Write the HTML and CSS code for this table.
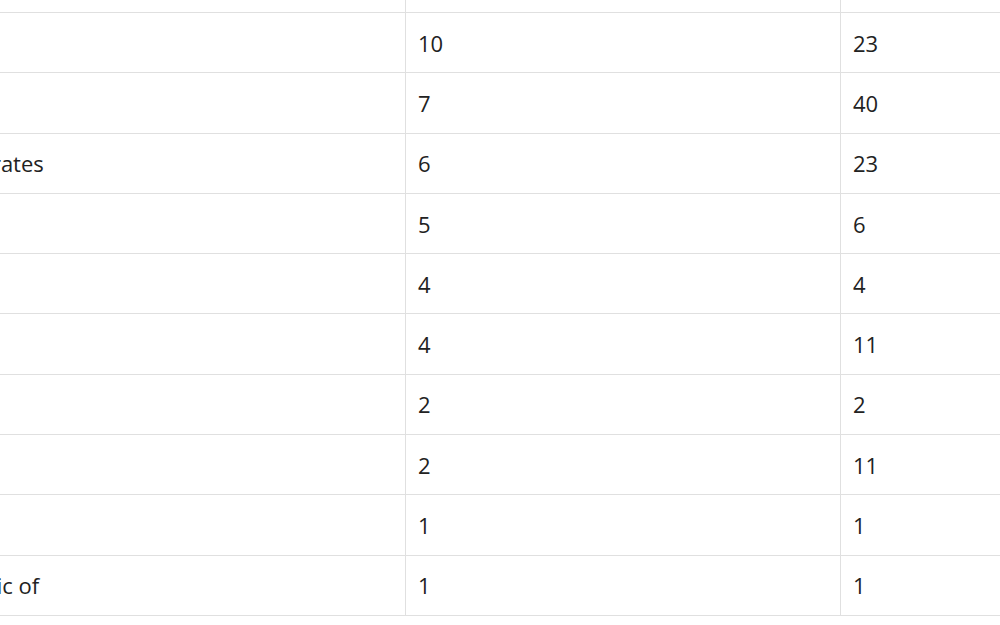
FILE: index.html
```html
<!DOCTYPE html>
<html lang="en">
<head>
<meta charset="utf-8">
<title>Table</title>
<link rel="stylesheet" href="styles.css">
</head>
<body>
<div class="table">
  <div class="row row-cut"><div class="cell c1"></div><div class="cell c2"></div><div class="cell c3"></div></div>
  <div class="row"><div class="cell c1"></div><div class="cell c2">10</div><div class="cell c3">23</div></div>
  <div class="row"><div class="cell c1"></div><div class="cell c2">7</div><div class="cell c3">40</div></div>
  <div class="row"><div class="cell c1">United Arab Emirates</div><div class="cell c2">6</div><div class="cell c3">23</div></div>
  <div class="row"><div class="cell c1"></div><div class="cell c2">5</div><div class="cell c3">6</div></div>
  <div class="row"><div class="cell c1"></div><div class="cell c2">4</div><div class="cell c3">4</div></div>
  <div class="row"><div class="cell c1"></div><div class="cell c2">4</div><div class="cell c3">11</div></div>
  <div class="row"><div class="cell c1"></div><div class="cell c2">2</div><div class="cell c3">2</div></div>
  <div class="row"><div class="cell c1"></div><div class="cell c2">2</div><div class="cell c3">11</div></div>
  <div class="row"><div class="cell c1"></div><div class="cell c2">1</div><div class="cell c3">1</div></div>
  <div class="row"><div class="cell c1">Moldova, Republic of</div><div class="cell c2">1</div><div class="cell c3">1</div></div>
</div>
<div class="more"><span class="dot"></span></div>
</body>
</html>
```

FILE: styles.css
```css
html, body {
  margin: 0;
  padding: 0;
  background: #ffffff;
  overflow: hidden;
}

body {
  font-family: "Open Sans", "Noto Sans", sans-serif;
  font-size: 22px;
  font-weight: 500;
  color: #222222;
  width: 1000px;
  height: 625px;
}

.table {
  margin-left: -187px;
  width: 1300px;
}

.row {
  display: grid;
  grid-template-columns: 592px 435px 1fr;
  height: 60.3px;
  box-sizing: border-box;
  border-bottom: 1px solid #e0e0e0;
}

.row-cut {
  height: 13px;
}

.cell {
  display: flex;
  align-items: center;
  padding: 0 12px;
  white-space: nowrap;
  box-sizing: border-box;
  overflow: hidden;
}

.c2, .c3 {
  border-left: 1px solid #e0e0e0;
}

.more {
  padding-top: 6px;
  padding-left: 522px;
  line-height: 0;
}

.dot {
  display: inline-block;
  width: 3px;
  height: 3px;
  border-radius: 1px;
  background: #4a8fe0;
}
```
